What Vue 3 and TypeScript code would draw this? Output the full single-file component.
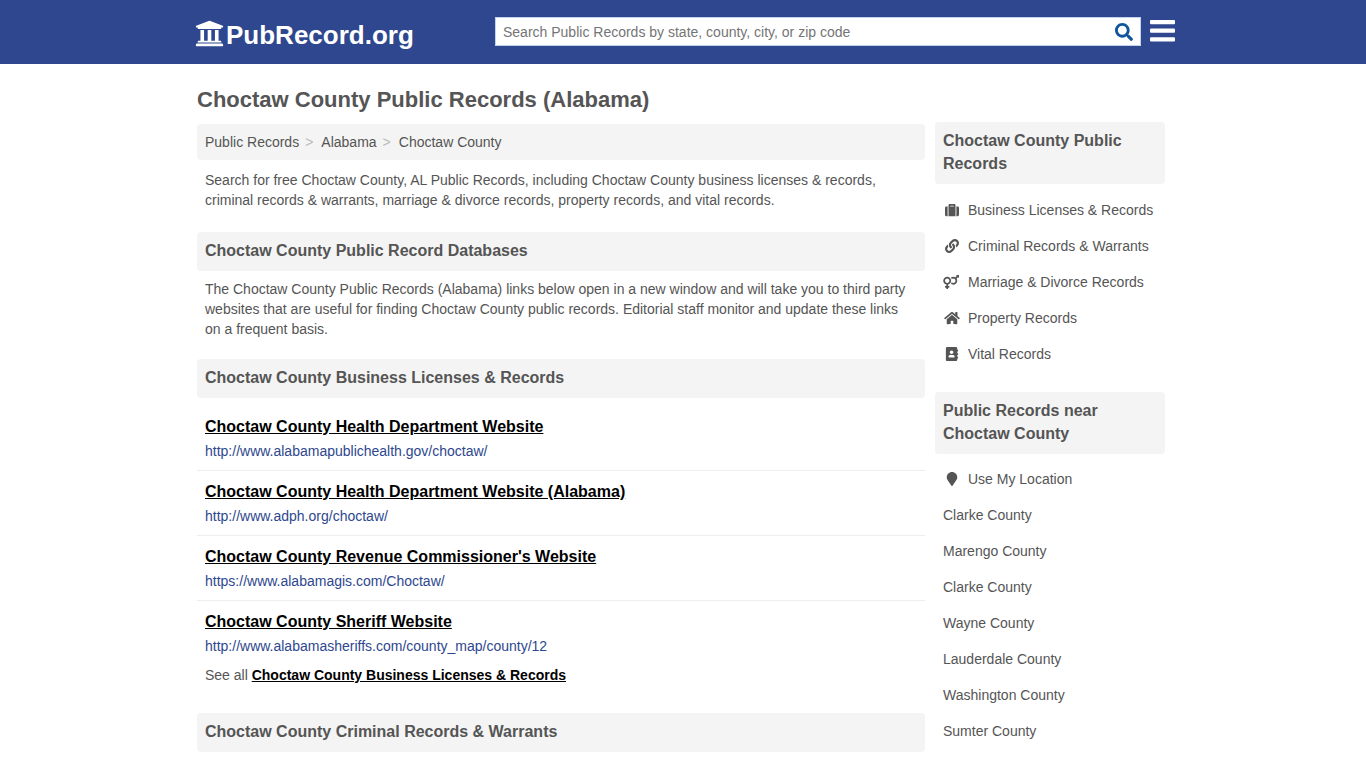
<script setup lang="ts">
import { ref } from 'vue'

interface Icon { viewBox: string; path: string }
interface RecordLink { title: string; url: string }
interface Category { label: string; icon: keyof typeof icons }

const icons = {
  suitcase: {
    viewBox: '0 0 512 512',
    path: 'M128 480h256V80c0-26.5-21.5-48-48-48H176c-26.5 0-48 21.5-48 48v400zm64-384h128v32H192V96zm320 80v256c0 26.5-21.5 48-48 48h-48V128h48c26.5 0 48 21.5 48 48zM96 480H48c-26.5 0-48-21.5-48-48V176c0-26.5 21.5-48 48-48h48v352z',
  },
  link: {
    viewBox: '0 0 512 512',
    path: 'M326.612 185.391c59.747 59.809 58.927 155.698.36 214.59-.11.12-.24.25-.36.37l-67.2 67.2c-59.27 59.27-155.699 59.262-214.96 0-59.27-59.26-59.27-155.7 0-214.96l37.106-37.106c9.84-9.84 26.786-3.3 27.294 10.606.648 17.722 3.826 35.527 9.69 52.721 1.986 5.822.567 12.262-3.783 16.612l-13.087 13.087c-28.026 28.026-28.905 73.66-1.155 101.96 28.024 28.579 74.086 28.749 102.325.51l67.2-67.19c28.191-28.191 28.073-73.757 0-101.83-3.701-3.694-7.429-6.564-10.341-8.569a16.037 16.037 0 0 1-6.947-12.606c-.396-10.567 3.348-21.456 11.698-29.806l21.054-21.055c5.521-5.521 14.182-6.199 20.584-1.731a152.482 152.482 0 0 1 20.522 17.197zM467.547 44.449c-59.261-59.262-155.69-59.27-214.96 0l-67.2 67.2c-.12.12-.25.25-.36.37-58.566 58.892-59.387 154.781.36 214.59a152.454 152.454 0 0 0 20.521 17.196c6.402 4.468 15.064 3.789 20.584-1.731l21.054-21.055c8.35-8.35 12.094-19.239 11.698-29.806a16.037 16.037 0 0 0-6.947-12.606c-2.912-2.005-6.64-4.875-10.341-8.569-28.073-28.073-28.191-73.639 0-101.83l67.2-67.19c28.239-28.239 74.3-28.069 102.325.51 27.75 28.3 26.872 73.934-1.155 101.96l-13.087 13.087c-4.35 4.35-5.769 10.79-3.783 16.612 5.864 17.194 9.042 34.999 9.69 52.721.509 13.906 17.454 20.446 27.294 10.606l37.106-37.106c59.271-59.259 59.271-155.699.001-214.959z',
  },
  couple: {
    viewBox: '0 0 640 512',
    path: 'M564 0h-79c-10.700 0-16 12.900-8.500 20.500l16.900 16.900-48.700 48.700C422.500 72.100 396.200 64 368 64c-33.700 0-64.600 11.600-89.200 30.900 14 16.700 25 36 32.100 57.100 14.500-14.800 34.700-24 57.100-24 44.100 0 80 35.900 80 80s-35.900 80-80 80c-22.300 0-42.600-9.200-57.100-24-7.100 21.100-18 40.400-32.100 57.100 24.500 19.400 55.500 30.900 89.200 30.900 79.500 0 144-64.500 144-144 0-28.200-8.100-54.500-22.100-76.700l48.700-48.700 16.900 16.900c7.500 7.500 20.500 2.200 20.500-8.500V12c0-6.600-5.400-12-12-12zM144 64C64.500 64 0 128.500 0 208c0 68.500 47.900 125.900 112 140.400V400H76c-6.600 0-12 5.400-12 12v40c0 6.600 5.400 12 12 12h36v36c0 6.600 5.400 12 12 12h40c6.600 0 12-5.400 12-12v-36h36c6.600 0 12-5.400 12-12v-40c0-6.600-5.400-12-12-12h-36v-51.600c64.100-14.600 112-71.900 112-140.400 0-79.500-64.500-144-144-144zm0 224c-44.100 0-80-35.900-80-80s35.900-80 80-80 80 35.900 80 80-35.900 80-80 80z',
  },
  home: {
    viewBox: '0 0 576 512',
    path: 'M280.37 148.26L96 300.11V464a16 16 0 0 0 16 16l112.06-.29a16 16 0 0 0 15.92-16V368a16 16 0 0 1 16-16h64a16 16 0 0 1 16 16v95.64a16 16 0 0 0 16 16.05L464 480a16 16 0 0 0 16-16V300L295.67 148.26a12.19 12.19 0 0 0-15.3 0zM571.6 251.47L488 182.56V44.05a12 12 0 0 0-12-12h-56a12 12 0 0 0-12 12v72.61L318.47 43a48 48 0 0 0-61 0L4.34 251.47a12 12 0 0 0-1.600 16.900l25.500 31A12 12 0 0 0 45.150 301l235.220-193.740a12.190 12.190 0 0 1 15.300 0L530.900 301a12 12 0 0 0 16.900-1.600l25.500-31a12 12 0 0 0-1.700-16.930z',
  },
  book: {
    viewBox: '0 0 448 512',
    path: 'M436 160c6.600 0 12-5.400 12-12v-40c0-6.600-5.400-12-12-12h-20V48c0-26.500-21.500-48-48-48H48C21.500 0 0 21.500 0 48v416c0 26.500 21.500 48 48 48h320c26.500 0 48-21.500 48-48v-48h20c6.600 0 12-5.400 12-12v-40c0-6.600-5.400-12-12-12h-20v-64h20c6.600 0 12-5.400 12-12v-40c0-6.600-5.400-12-12-12h-20v-64h20zm-228-32c35.300 0 64 28.700 64 64s-28.700 64-64 64-64-28.700-64-64 28.700-64 64-64zm112 236.800c0 10.600-10 19.200-22.400 19.200H118.400C106 384 96 375.400 96 364.800v-19.200c0-31.800 30.100-57.600 67.200-57.600h5c12.300 5.100 25.700 8 39.800 8s27.600-2.900 39.800-8h5c37.100 0 67.200 25.800 67.200 57.600v19.200z',
  },
} satisfies Record<string, Icon>

const query = ref('')

const businessLinks: RecordLink[] = [
  { title: 'Choctaw County Health Department Website', url: 'http://www.alabamapublichealth.gov/choctaw/' },
  { title: 'Choctaw County Health Department Website (Alabama)', url: 'http://www.adph.org/choctaw/' },
  { title: "Choctaw County Revenue Commissioner's Website", url: 'https://www.alabamagis.com/Choctaw/' },
  { title: 'Choctaw County Sheriff Website', url: 'http://www.alabamasheriffs.com/county_map/county/12' },
]

const categories: Category[] = [
  { label: 'Business Licenses & Records', icon: 'suitcase' },
  { label: 'Criminal Records & Warrants', icon: 'link' },
  { label: 'Marriage & Divorce Records', icon: 'couple' },
  { label: 'Property Records', icon: 'home' },
  { label: 'Vital Records', icon: 'book' },
]

const nearby: string[] = [
  'Clarke County', 'Marengo County', 'Clarke County', 'Wayne County',
  'Lauderdale County', 'Washington County', 'Sumter County',
]
</script>

<template>
  <header class="topbar">
    <div class="topbar-inner">
      <a class="brand" href="#">
        <svg class="brand-icon" viewBox="0 0 512 512" aria-hidden="true">
          <path d="M496 128v16a8 8 0 0 1-8 8h-24v12c0 6.627-5.373 12-12 12H60c-6.627 0-12-5.373-12-12v-12H24a8 8 0 0 1-8-8v-16a8 8 0 0 1 4.941-7.392l232-88a7.996 7.996 0 0 1 6.118 0l232 88A8 8 0 0 1 496 128zm-24 304H40c-13.255 0-24 10.745-24 24v16a8 8 0 0 0 8 8h464a8 8 0 0 0 8-8v-16c0-13.255-10.745-24-24-24zM96 192v192H60c-6.627 0-12 5.373-12 12v20h416v-20c0-6.627-5.373-12-12-12h-36V192h-64v192h-64V192h-64v192h-64V192H96z" />
        </svg>
        <span>PubRecord.org</span>
      </a>
      <form class="search" role="search" @submit.prevent>
        <input v-model="query" type="text" aria-label="Search public records" placeholder="Search Public Records by state, county, city, or zip code">
        <button type="submit" aria-label="Search">
          <svg viewBox="0 0 512 512" aria-hidden="true">
            <path d="M505 442.700L405.300 343c-4.500-4.500-10.600-7-17-7H372c27.600-35.300 44-79.700 44-128C416 93.100 322.900 0 208 0S0 93.100 0 208s93.100 208 208 208c48.300 0 92.700-16.400 128-44v16.300c0 6.400 2.500 12.500 7 17l99.700 99.700c9.400 9.400 24.600 9.400 33.900 0l28.300-28.300c9.400-9.400 9.400-24.600.1-34zM208 336c-70.700 0-128-57.200-128-128 0-70.700 57.200-128 128-128 70.700 0 128 57.200 128 128 0 70.700-57.200 128-128 128z" />
          </svg>
        </button>
      </form>
      <button class="menu" type="button" aria-label="Menu">
        <svg viewBox="0 0 25 22" aria-hidden="true">
          <rect width="25" height="4.300" rx="1" />
          <rect y="8.500" width="25" height="4.300" rx="1" />
          <rect y="17.200" width="25" height="4.300" rx="1" />
        </svg>
      </button>
    </div>
  </header>

  <div class="page">
    <main>
      <h1>Choctaw County Public Records (Alabama)</h1>
      <nav class="crumbs" aria-label="Breadcrumb">
        <ol>
          <li><a href="#">Public Records</a></li>
          <li><a href="#">Alabama</a></li>
          <li><a href="#">Choctaw County</a></li>
        </ol>
      </nav>
      <p class="intro">Search for free Choctaw County, AL Public Records, including Choctaw County business licenses &amp; records, criminal records &amp; warrants, marriage &amp; divorce records, property records, and vital records.</p>

      <h2>Choctaw County Public Record Databases</h2>
      <p class="about">The Choctaw County Public Records (Alabama) links below open in a new window and will take you to third party websites that are useful for finding Choctaw County public records. Editorial staff monitor and update these links on a frequent basis.</p>

      <h2>Choctaw County Business Licenses &amp; Records</h2>
      <ul class="records">
        <li v-for="item in businessLinks" :key="item.url">
          <a class="record-title" :href="item.url" target="_blank">{{ item.title }}</a>
          <span class="record-url">{{ item.url }}</span>
        </li>
      </ul>
      <p class="see-all">See all <a href="#">Choctaw County Business Licenses &amp; Records</a></p>

      <h2>Choctaw County Criminal Records &amp; Warrants</h2>
    </main>

    <aside>
      <h2>Choctaw County Public Records</h2>
      <ul class="side-list">
        <li v-for="item in categories" :key="item.label">
          <a href="#">
            <svg class="side-icon" :viewBox="icons[item.icon].viewBox" aria-hidden="true"><path :d="icons[item.icon].path" /></svg>
            {{ item.label }}
          </a>
        </li>
      </ul>
      <h2>Public Records near Choctaw County</h2>
      <ul class="side-list nearby">
        <li>
          <a href="#">
            <svg class="side-icon" viewBox="0 0 384 512" aria-hidden="true"><path d="M172.268 501.67C26.97 291.031 0 269.413 0 192 0 85.961 85.961 0 192 0s192 85.961 192 192c0 77.413-26.97 99.031-172.268 309.67-9.535 13.774-29.93 13.773-39.464 0z" /></svg>
            Use My Location
          </a>
        </li>
        <li v-for="(county, i) in nearby" :key="i"><a href="#">{{ county }}</a></li>
      </ul>
    </aside>
  </div>
</template>

<style>
body {
  background: #fff;
  color: #555;
  font: 14px/20px "Liberation Sans", Arial, sans-serif;
}
</style>

<style scoped>
* { box-sizing: border-box; }
h1, h2, p, ul, ol { margin: 0; padding: 0; }
ul, ol { list-style: none; }
a { color: inherit; text-decoration: none; }
svg { display: block; fill: currentColor; }
button { border: 0; padding: 0; background: none; cursor: pointer; }

.topbar { background: #2e478e; }
.topbar-inner {
  display: flex;
  align-items: flex-start;
  max-width: 984px;
  height: 64px;
  margin: 0 auto;
  padding: 16px 0 0 4px;
}
.brand {
  display: flex;
  align-items: flex-start;
  gap: 2px;
  margin-right: auto;
  color: #fff;
  font-size: 26px;
  font-weight: bold;
  line-height: 38px;
}
.brand-icon { width: 29px; height: 29px; margin-top: 3px; }
.search {
  display: flex;
  flex: 0 1 646px;
  height: 29px;
  margin: 1px 9px 0 16px;
  background: #fff;
  border: 1px solid #c3d3ee;
}
.search input {
  flex: 1;
  min-width: 0;
  padding: 0 7px;
  border: 0;
  outline: 0;
  background: transparent;
  color: #555;
  font: inherit;
}
.search input::placeholder { color: #757575; opacity: 1; }
.search button {
  display: grid;
  place-items: center;
  width: 32px;
  color: #0f549c;
}
.search button svg { width: 18px; height: 18px; }
.menu { margin-top: 4px; color: #fff; }
.menu svg { width: 25px; height: 22px; }

.page {
  display: flex;
  align-items: flex-start;
  gap: 10px;
  max-width: 980px;
  margin: 0 auto;
  padding: 0 8px 0 4px;
}
main { flex: 1; min-width: 0; padding-top: 22px; }
aside { flex: 0 0 230px; padding-top: 58px; }

h1 {
  margin-bottom: 10px;
  font-size: 22px;
  line-height: 28px;
}
h2 {
  padding: 7px 8px 9px;
  background: #f4f4f4;
  border-radius: 4px;
  font-size: 16px;
  line-height: 23px;
}

.crumbs {
  padding: 8px;
  background: #f4f4f4;
  border-radius: 4px;
}
.crumbs ol { display: flex; }
.crumbs li + li::before {
  content: ">";
  padding: 0 8px 0 6px;
  color: #bbb;
}
.intro { padding: 10px 8px 22px; }
.about { padding: 8px 8px 20px; }

.records { padding-top: 8px; }
.records li {
  display: flex;
  flex-direction: column;
  align-items: flex-start;
  gap: 4px;
  padding: 11px 8px 9px;
  border-bottom: 1px solid #eee;
}
.records li:last-child { border-bottom: 0; }
.record-title {
  color: #000;
  font-size: 16px;
  font-weight: bold;
  text-decoration: underline;
}
.record-url { color: #2e478e; }
.see-all { padding: 0 8px 28px; }
.see-all a {
  color: #000;
  font-weight: bold;
  text-decoration: underline;
}

.side-list { padding: 8px 8px 20px; }
.side-list.nearby { padding-top: 7px; }
.side-list a {
  display: flex;
  align-items: center;
  gap: 7px;
  padding: 8px 0;
}
.side-icon { width: 18px; height: 14px; }
</style>
